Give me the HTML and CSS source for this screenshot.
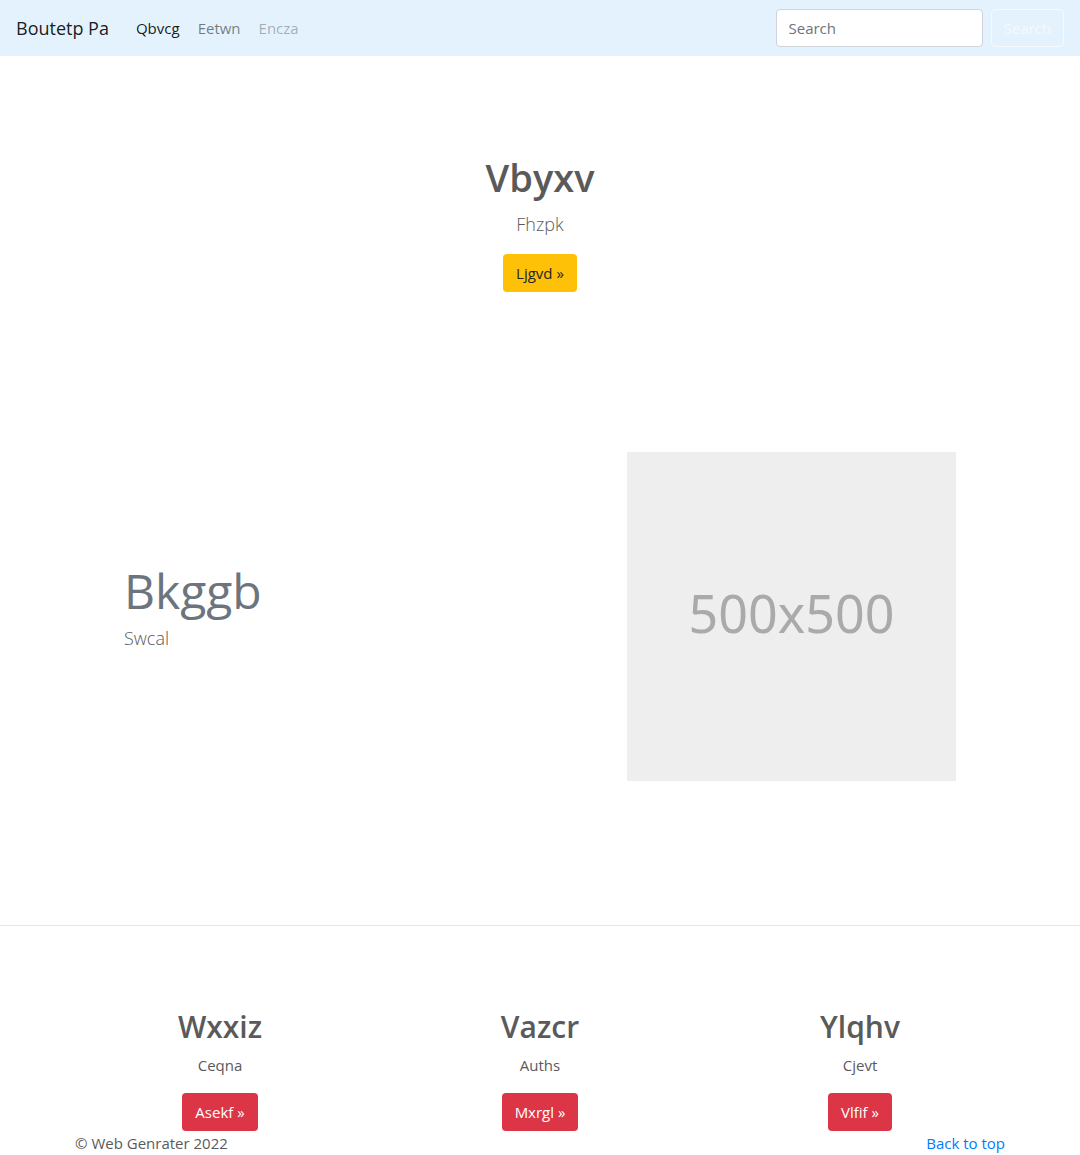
FILE: index.html
```html
<!DOCTYPE html>
<html lang="en">
<head>
<meta charset="utf-8">
<meta name="viewport" content="width=device-width, initial-scale=1">
<title>Boutetp Pa</title>
<link rel="stylesheet" href="styles.css">
</head>
<body id="top">
<header class="navbar">
  <a class="brand" href="#">Boutetp Pa</a>
  <nav class="nav">
    <a class="nav-link active" href="#">Qbvcg</a>
    <a class="nav-link" href="#">Eetwn</a>
    <a class="nav-link disabled" href="#" aria-disabled="true">Encza</a>
  </nav>
  <form class="search">
    <input class="search-input" type="search" placeholder="Search" aria-label="Search">
    <button class="btn btn-outline" type="submit">Search</button>
  </form>
</header>
<main>
  <section class="hero">
    <h1 class="hero-title">Vbyxv</h1>
    <p class="lead">Fhzpk</p>
    <a class="btn btn-warning" href="#">Ljgvd »</a>
  </section>
  <section class="featurette">
    <div class="featurette-text">
      <h2 class="featurette-title">Bkggb</h2>
      <p class="lead">Swcal</p>
    </div>
    <div class="placeholder" role="img" aria-label="500x500">500x500</div>
  </section>
  <hr class="divider">
  <section class="columns">
    <article class="column">
      <h2 class="column-title">Wxxiz</h2>
      <p class="column-text">Ceqna</p>
      <a class="btn btn-danger" href="#">Asekf »</a>
    </article>
    <article class="column">
      <h2 class="column-title">Vazcr</h2>
      <p class="column-text">Auths</p>
      <a class="btn btn-danger" href="#">Mxrgl »</a>
    </article>
    <article class="column">
      <h2 class="column-title">Ylqhv</h2>
      <p class="column-text">Cjevt</p>
      <a class="btn btn-danger" href="#">Vlfif »</a>
    </article>
  </section>
</main>
<footer class="footer">
  <span>© Web Genrater 2022</span>
  <a class="footer-link" href="#top">Back to top</a>
</footer>
</body>
</html>
```
FILE: styles.css
```css
*, *::before, *::after { box-sizing: border-box; }

body {
  margin: 0;
  background: #fff;
  color: #5a5a5a;
  font-family: "Open Sans", "Noto Sans", sans-serif;
  font-size: 15px;
  line-height: 24px;
}

h1, h2, p { margin: 0; }
a { text-decoration: none; }

.navbar {
  display: flex;
  align-items: center;
  padding: 9px 16px;
  background: #e3f2fd;
}
.brand {
  margin-right: 18px;
  color: rgba(0, 0, 0, 0.9);
  font-size: 18px;
}
.nav { display: flex; flex: 1; }
.nav-link { padding: 0 9px; color: rgba(0, 0, 0, 0.5); }
.nav-link.active { color: rgba(0, 0, 0, 0.9); }
.nav-link.disabled { color: rgba(0, 0, 0, 0.3); }

.search { display: flex; gap: 8px; }
.search-input {
  width: 207px;
  height: 38px;
  padding: 6px 12px;
  border: 1px solid #ced4da;
  border-radius: 4px;
  background: #fff;
  font: inherit;
}
.search-input::placeholder { color: #6c757d; opacity: 1; }

.btn {
  display: inline-block;
  padding: 6px 12px;
  border: 1px solid transparent;
  border-radius: 4px;
  font: inherit;
}
.btn-outline { border-color: #f8f9fa; background: transparent; color: #f8f9fa; }
.btn-warning { background: #ffc107; color: #212529; }
.btn-danger { background: #dc3545; color: #fff; }

.lead { font-size: 18px; font-weight: 300; line-height: 30px; }

.hero { padding: 97px 16px 160px; text-align: center; }
.hero-title { margin-bottom: 8px; font-size: 38px; font-weight: 600; line-height: 48px; }
.hero .lead { margin-bottom: 15px; }

.featurette {
  display: grid;
  grid-template-columns: 7fr 5fr;
  max-width: 864px;
  margin: 0 auto;
}
.featurette-text { padding: 109px 16px 0; }
.featurette-title {
  margin-bottom: 2px;
  color: #6c757d;
  font-size: 48px;
  font-weight: 400;
  line-height: 60px;
}
.placeholder {
  display: flex;
  align-items: center;
  justify-content: center;
  aspect-ratio: 1;
  margin: 0 16px 0 15px;
  padding-bottom: 8px;
  background: #eee;
  color: #aaa;
  font-family: "Noto Sans", sans-serif;
  font-size: 52px;
}

.divider { margin: 144px 0 81px; border: 0; border-top: 1px solid rgba(0, 0, 0, 0.1); }

.columns {
  display: grid;
  grid-template-columns: repeat(3, 1fr);
  max-width: 960px;
  margin: 0 auto;
  text-align: center;
}
.column-title { margin-bottom: 6px; font-size: 30px; font-weight: 600; line-height: 40px; }
.column-text { margin-bottom: 16px; }

.footer {
  display: flex;
  justify-content: space-between;
  max-width: 960px;
  margin: 0 auto;
  padding: 0 15px;
}
.footer-link { color: #007bff; }
```
